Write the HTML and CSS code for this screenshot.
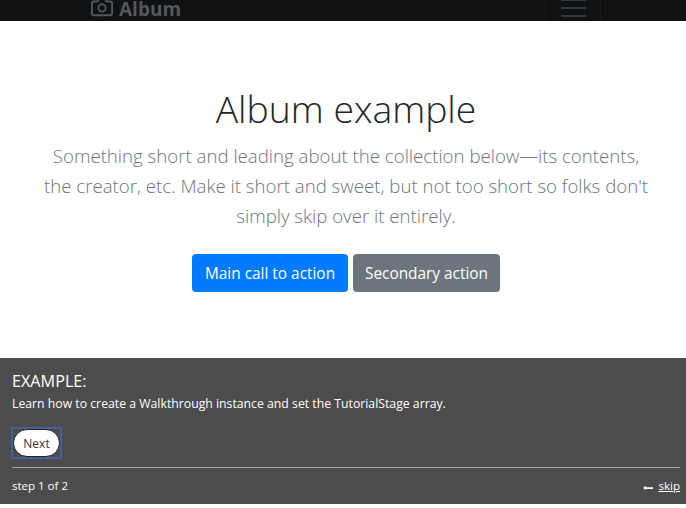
FILE: index.html
```html
<!DOCTYPE html>
<html lang="en">
<head>
<meta charset="utf-8">
<title>Album example</title>
<link rel="stylesheet" href="styles.css">
</head>
<body>
<header class="navbar">
  <div class="brand">
    <svg class="camera" width="22" height="22" viewBox="0 0 24 24" fill="none" stroke="#55585b" stroke-width="2" stroke-linecap="round" stroke-linejoin="round"><path d="M23 19a2 2 0 0 1-2 2H3a2 2 0 0 1-2-2V8a2 2 0 0 1 2-2h4l2-3h6l2 3h4a2 2 0 0 1 2 2z"/><circle cx="12" cy="13" r="4"/></svg>
    <strong>Album</strong>
  </div>
  <div class="toggler"><span></span><span></span><span></span></div>
</header>
<main class="hero">
  <h1>Album example</h1>
  <p class="lead">Something short and leading about the collection below—its contents, the creator, etc. Make it short and sweet, but not too short so folks don't simply skip over it entirely.</p>
  <div class="actions">
    <a class="btn primary">Main call to action</a>
    <a class="btn secondary">Secondary action</a>
  </div>
</main>
<section class="walk">
  <h2>EXAMPLE:</h2>
  <p class="desc">Learn how to create a Walkthrough instance and set the TutorialStage array.</p>
  <div class="next-wrap"><button class="next">Next</button></div>
  <footer class="walk-foot">
    <span>step 1 of 2</span>
    <span class="skip-wrap">
      <svg class="skip-arrow" width="10" height="6" viewBox="0 0 10 6"><path d="M0 3 L3 .8 V2.2 H10 V4 H3 V5.2 Z" fill="#fff"/></svg>
      <a class="skip">skip</a>
    </span>
  </footer>
</section>
</body>
</html>
```
FILE: styles.css
```css
* { box-sizing: border-box; }
html, body { margin: 0; padding: 0; background: #fff; }
body {
  width: 686px;
  height: 508px;
  overflow: hidden;
  font-family: "Open Sans", "Noto Sans", sans-serif;
  display: flex;
  flex-direction: column;
}
.navbar {
  height: 21px;
  flex: none;
  background: #0f1113;
  display: flex;
  justify-content: space-between;
  align-items: flex-start;
  padding: 0 85px 0 91px;
  overflow: hidden;
}
.brand {
  display: flex;
  align-items: center;
  gap: 6px;
  color: #55585b;
  font-size: 19px;
  line-height: 20px;
  height: 18px;
}
.brand strong { font-weight: 700; }
.camera { flex: none; margin-top: -4px; }
.toggler {
  width: 56px;
  height: 21px;
  border-left: 1px solid #1b1d1f;
  border-right: 1px solid #1b1d1f;
  display: flex;
  flex-direction: column;
  align-items: center;
  gap: 6px;
  margin-top: -1px;
}
.toggler span { display: block; flex: none; width: 25px; height: 2px; background: #36393b; }
.hero {
  height: 337px;
  flex: none;
  padding: 64px 0 0 6px;
  text-align: center;
}
h1 {
  margin: 0;
  font-size: 37.3px;
  font-weight: 300;
  line-height: 48px;
  color: #212529;
}
.lead {
  margin: 8px auto 0;
  width: 610px;
  font-size: 18.65px;
  font-weight: 300;
  line-height: 30px;
  color: #6c757d;
}
.actions {
  display: flex;
  justify-content: center;
  gap: 5px;
  margin-top: 23px;
}
.btn {
  height: 38px;
  border-radius: 4px;
  color: #fff;
  font-size: 15.4px;
  line-height: 39px;
}
.primary { background: #007bff; width: 156px; }
.secondary { background: #6c757d; width: 147px; }
.walk {
  height: 146px;
  flex: none;
  background: #4c4c4c;
  color: #fff;
  padding: 14px 6px 0 12px;
}
.walk h2 {
  margin: 0;
  font-size: 16.2px;
  font-weight: 400;
  line-height: 18px;
}
.desc {
  margin: 6px 0 0;
  font-size: 12.25px;
  font-weight: 500;
  line-height: 16px;
}
.next-wrap {
  margin: 15px 0 0 -1px;
  width: 51px;
  height: 32px;
  border: 2px solid #4a5f9a;
}
.next {
  display: block;
  width: 47px;
  height: 28px;
  border: 1px solid #222;
  border-radius: 14px;
  background: #fff;
  color: #333;
  font-family: inherit;
  font-size: 12px;
  padding: 0;
}
.walk-foot {
  margin-top: 8px;
  border-top: 1px solid #a3a3a3;
  display: flex;
  justify-content: space-between;
  padding-top: 11px;
  font-size: 11.5px;
  font-weight: 500;
  line-height: 14px;
}
.skip-wrap { display: flex; align-items: center; gap: 6px; }
.skip-arrow { margin-top: 3px; }
.skip { text-decoration: underline; }
```
